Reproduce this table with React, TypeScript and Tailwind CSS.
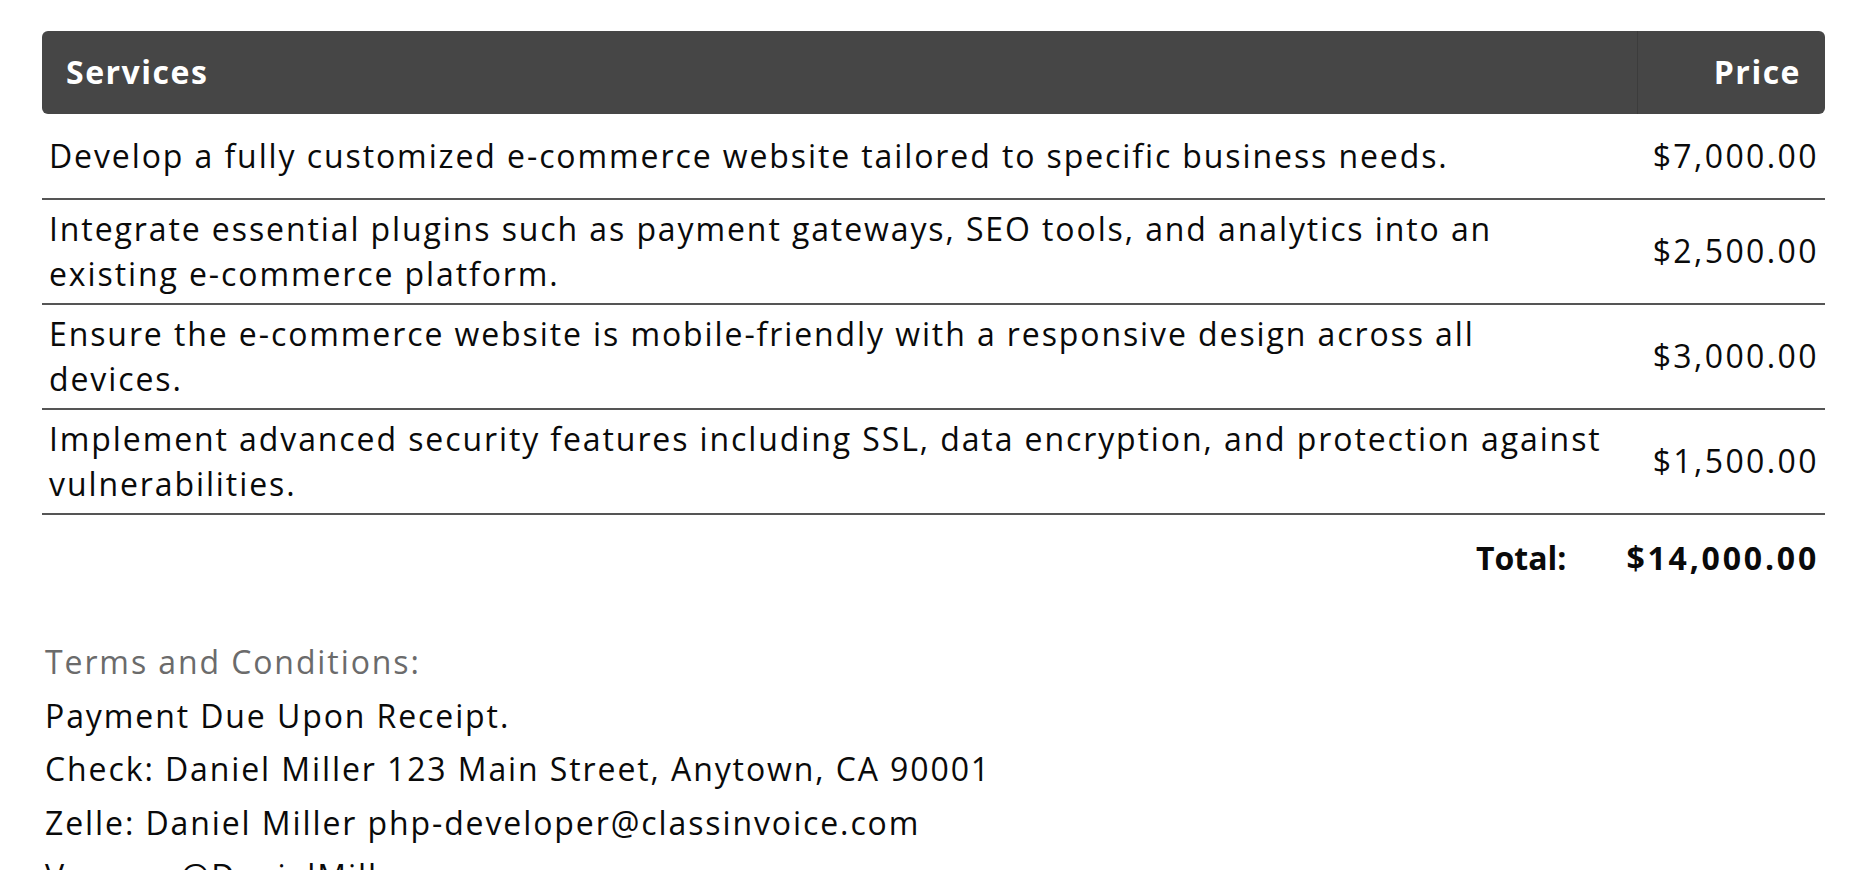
const services = [
  {
    description: "Develop a fully customized e-commerce website tailored to specific business needs.",
    price: "$7,000.00",
  },
  {
    description:
      "Integrate essential plugins such as payment gateways, SEO tools, and analytics into an existing e-commerce platform.",
    price: "$2,500.00",
  },
  {
    description:
      "Ensure the e-commerce website is mobile-friendly with a responsive design across all devices.",
    price: "$3,000.00",
  },
  {
    description:
      "Implement advanced security features including SSL, data encryption, and protection against vulnerabilities.",
    price: "$1,500.00",
  },
];

const terms = [
  "Payment Due Upon Receipt.",
  "Check: Daniel Miller 123 Main Street, Anytown, CA 90001",
  "Zelle: Daniel Miller php-developer@classinvoice.com",
  "Venmo: @DanielMiller",
];

export default function App() {
  return (
    <div className="min-h-screen bg-white pl-[42px] pr-[43px] pt-[31px] font-['Open_Sans',sans-serif] font-medium text-[#0a0a0a]">
      <table className="w-full border-collapse text-[32px] leading-[44.5px] tracking-[1.9px]">
        <thead>
          <tr className="bg-[#464646] text-white">
            <th className="h-[83px] rounded-l-[6px] pl-[24px] text-left font-bold tracking-[1.5px]">Services</th>
            <th className="h-[83px] w-[188px] rounded-r-[6px] border-l border-[#3c3c3c] pr-[24px] text-right font-bold tracking-[1.5px]">
              Price
            </th>
          </tr>
        </thead>
        <tbody>
          {services.map((item, i) => (
            <tr key={i} className="border-b-2 border-[#555]">
              <td className="h-[85px] py-[7px] pl-[7px] pr-[28px] align-middle">{item.description}</td>
              <td className="h-[85px] pr-[6px] text-right align-middle tracking-[2.4px]">{item.price}</td>
            </tr>
          ))}
        </tbody>
      </table>

      <div className="flex h-[86px] items-center justify-end gap-[60px] pr-[6px] text-[32px] font-bold">
        <span>Total:</span>
        <span className="tracking-[2.8px]">$14,000.00</span>
      </div>

      <div className="mt-[34px] pl-[3px] text-[32px] leading-[53.6px] tracking-[1.9px]">
        <p className="text-[#6b6b6b]">Terms and Conditions:</p>
        {terms.map((line) => (
          <p key={line}>{line}</p>
        ))}
      </div>
    </div>
  );
}
